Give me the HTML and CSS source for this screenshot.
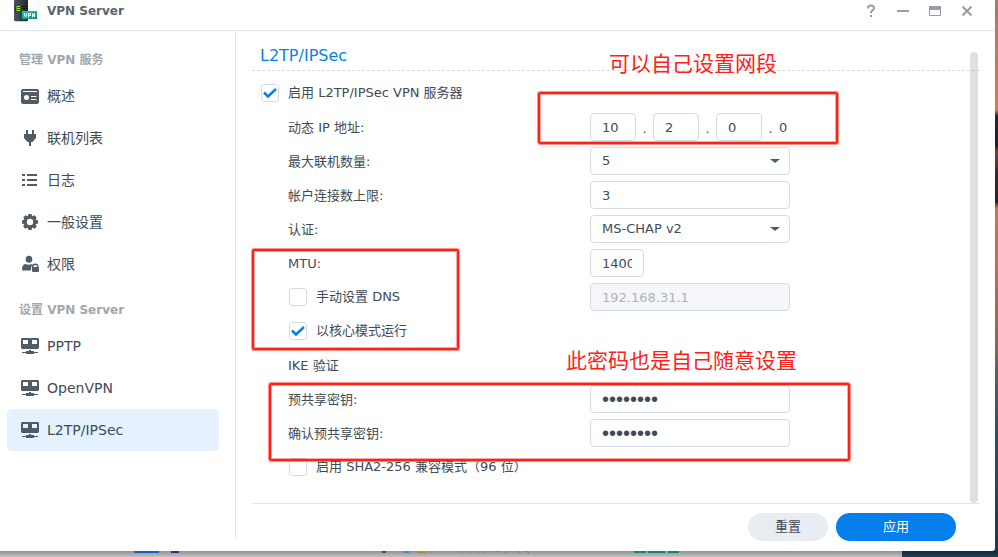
FILE: index.html
```html
<!DOCTYPE html>
<html lang="zh-CN">
<head>
<meta charset="utf-8">
<title>VPN Server</title>
<link rel="stylesheet" href="styles.css">
</head>
<body>
<svg class="defs" aria-hidden="true">
  <symbol id="net" viewBox="0 0 18 18">
    <path fill-rule="evenodd" d="M1 1h7.500l.5.5.5-.5H17l1 1v9l-1 1H1l-1-1V2zM2 3v4h5V3zM11 3v4h5V3z"/>
    <path d="M8 13h2v1h3v1h4v1h-4v1H5v-1H1v-1h4v-1h3z"/>
  </symbol>
</svg>
<div class="window">
  <header class="titlebar">
    <svg class="app-icon" width="24" height="24" viewBox="0 0 24 24" aria-hidden="true">
      <defs>
        <linearGradient id="case" x1="0" x2="1"><stop offset="0" stop-color="#4d5361"/><stop offset="1" stop-color="#23272f"/></linearGradient>
        <linearGradient id="tag" x1="0" x2="1" y1="0" y2="1"><stop offset="0" stop-color="#1fd0b0"/><stop offset="1" stop-color="#078c8c"/></linearGradient>
      </defs>
      <rect x="1" y="19" width="13" height="3" rx="1" fill="#c9ccd0"/>
      <rect x="0" y="-1" width="14" height="22" rx="1" fill="url(#case)"/>
      <path d="M1 6.500h13M1 8.500h13M1 10.500h7" stroke="#15181d"/>
      <path d="M3 6.500h3.500M3 8.500h3.500M3 10.500h3.500" stroke="#8bea1f"/>
      <path d="M2.500 6v5" stroke="#5a9c22"/>
      <rect x="8" y="11" width="15" height="8" fill="url(#tag)"/>
      <path d="M10.500 13v2l1 2 1-2v-2M14.500 17.500V13.500h2v2h-2M18.500 17.500v-4l2 3.500v-4" fill="none" stroke="#fff"/>
    </svg>
    <h1 class="app-name">VPN Server</h1>
    <div class="window-tools">
      <button type="button" aria-label="帮助"><svg viewBox="0 0 14 14"><path d="M4 4.500V4q0-2.500 3-2.500T10 4q0 1.300-1.500 2.300T7 8.500v.8M7 11v2"/></svg></button>
      <button type="button" aria-label="最小化"><svg viewBox="0 0 14 14"><path d="M1 7h12"/></svg></button>
      <button type="button" aria-label="最大化"><svg viewBox="0 0 14 14"><path d="M1 4h12" stroke-width="4"/><path d="M1.500 4v7.500h11V4" stroke-width="1"/></svg></button>
      <button type="button" aria-label="关闭"><svg viewBox="0 0 14 14"><path d="M2.500 2.500l9 9M11.500 2.500l-9 9"/></svg></button>
    </div>
  </header>
  <div class="body">
    <nav class="sidebar">
      <h2>管理 VPN 服务</h2>
      <a href="#overview"><svg viewBox="0 0 18 18"><path fill-rule="evenodd" d="M1.500 2h15L18 3.500v12L16.500 17h-15L0 15.500v-12zM2 4v1h14V4zM5.500 8a2.500 2.500 0 1 0 0 5 2.500 2.500 0 0 0 0-5M10 9v1h5.500V9zM10 12v1h5.500v-1z"/></svg>概述</a>
      <a href="#connections"><svg viewBox="0 0 18 18"><path d="M5 1h2v4h4V1h2v4h2v4l-3.500 4H10v4H8v-4H6.500L3 9V5h2z"/></svg>联机列表</a>
      <a href="#log"><svg viewBox="0 0 18 18"><path d="M1 3h3v2H1zM6 3h10v2H6zM1 8h3v2H1zM6 8h10v2H6zM1 13h3v2H1zM6 13h10v2H6z"/></svg>日志</a>
      <a href="#general"><svg viewBox="0 0 18 18"><path fill-rule="evenodd" d="M7.500 1h3l.6 2.300 2.400-1.100 2.100 2.200-1 2.100 2.400 1v3l-2.400.8 1.100 2.300-2.200 2.100-2.300-1.100-.7 2.400h-3l-.9-2.400-2.200 1.100-2.200-2.100 1.200-2.300L1 10.500v-3l2.400-1-1.100-2.200 2.200-2.100 2.200 1.100zM9 5.800a3.200 3.200 0 1 0 0 6.400 3.200 3.200 0 0 0 0-6.400"/></svg>一般设置</a>
      <a href="#privilege"><svg viewBox="0 0 18 18"><ellipse cx="8" cy="4.300" rx="3.300" ry="3.500"/><path d="M4 9q4 1.500 7 0l.5.500Q10 11 10 15.500H2q-1 0-1-1Q1 10 4 9"/><path fill-rule="evenodd" d="M11 12v-.5q0-3 3.200-3t3.200 3v.5l.6.500v4l-1 .5h-5l-1-.5v-4zM12.500 12h3.500q0-2-1.750-2T12.500 12"/></svg>权限</a>
      <h2 class="second">设置 VPN Server</h2>
      <a href="#pptp"><svg><use href="#net"/></svg>PPTP</a>
      <a href="#openvpn"><svg><use href="#net"/></svg>OpenVPN</a>
      <a href="#l2tp" class="active" aria-current="page"><svg><use href="#net"/></svg>L2TP/IPSec</a>
    </nav>
    <main>
      <form>
        <section class="settings">
          <h2>L2TP/IPSec</h2>
          <div class="row"><label class="check top"><input type="checkbox" checked>启用 L2TP/IPSec VPN 服务器</label></div>
          <div class="row"><label for="ip1">动态 IP 地址:</label>
            <div class="address"><input id="ip1" type="text" value="10"><span>.</span><input type="text" value="2" aria-label="第二段"><span>.</span><input type="text" value="0" aria-label="第三段"><span>.</span><b>0</b></div></div>
          <div class="row"><label for="max">最大联机数量:</label><div class="select"><select id="max"><option>5</option></select></div></div>
          <div class="row"><label for="limit">帐户连接数上限:</label><input id="limit" type="text" value="3"></div>
          <div class="row"><label for="auth">认证:</label><div class="select"><select id="auth"><option>MS-CHAP v2</option></select></div></div>
          <div class="row"><label for="mtu">MTU:</label><input id="mtu" class="short" type="text" value="1400"></div>
          <div class="row"><label class="check"><input type="checkbox">手动设置 DNS</label><input type="text" value="192.168.31.1" aria-label="DNS" disabled></div>
          <div class="row"><label class="check"><input type="checkbox" checked>以核心模式运行</label></div>
          <div class="row"><span>IKE 验证</span></div>
          <div class="row"><label for="key">预共享密钥:</label><input id="key" type="password" value="abcdefgh"></div>
          <div class="row"><label for="key2">确认预共享密钥:</label><input id="key2" type="password" value="abcdefgh"></div>
          <div class="row"><label class="check"><input type="checkbox">启用 SHA2-256 兼容模式（96 位）</label></div>
        </section>
        <footer><button type="reset">重置</button><button type="submit" class="primary">应用</button></footer>
      </form>
      <div class="scrollbar"></div>
    </main>
  </div>
</div>
<div class="mark mark-address"></div>
<div class="mark mark-mtu"></div>
<div class="mark mark-key"></div>
<p class="note note-address">可以自己设置网段</p>
<p class="note note-key">此密码也是自己随意设置</p>
<svg class="behind" width="700" height="5" aria-hidden="true">
  <path d="M134 0h25v2h-25z" fill="#1463c4"/><path d="M171 0h8v2h-8z" fill="#173c94"/>
  <path d="M382 0h4v2h-4z" fill="#15569f"/><path d="M404 0h5v2h-5z" fill="#3d86c8"/><path d="M417 0h9v2h-9z" fill="#b38b36"/>
  <path d="M463 0l-1 2M469 0v2M477 0v2M484 0l2 2M495 0h6M505 0v2M520 0l-2 2M526 0l3 2" stroke="#777"/>
  <path d="M634 0h12v2h-12zM648 0h17v2h-17zM668 0h11v2h-11z" fill="#168078"/>
</svg>
</body>
</html>
```

FILE: styles.css
```css
* {
  box-sizing: border-box;
}

body {
  margin: 0;
  height: 100vh;
  padding: 0 3px 6px 0;
  overflow: hidden;
  position: relative;
  color: #414b55;
  font: 13px/20px "DejaVu Sans", "Noto Sans CJK SC", sans-serif;
  background:
    linear-gradient(#182a38, #1f4256) right bottom / 96px 6px no-repeat,
    linear-gradient(#8f8f8f, #c2c2c2) left bottom / 100% 6px no-repeat,
    linear-gradient(#a87868 0, #c07a50 60px, #c8814e 110px, #2a2430 116px, #1d1d2c 145px, #7a3f38 152px, #3a2430 175px, #2a2028 202px, #c07848 208px, #b87450 260px, #8a6458 350px, #5a6068 370px, #2c5068 430px, #1a3a50 557px);
}

h1, h2, p {
  margin: 0;
}

button, input, select {
  font: inherit;
  color: inherit;
}

.defs {
  position: absolute;
  width: 0;
  height: 0;
}

.window {
  height: 100%;
  display: flex;
  flex-direction: column;
  background: #fff;
  border-radius: 0 0 3px 0;
}

.titlebar {
  height: 31px;
  flex: none;
  display: flex;
  align-items: flex-start;
  padding: 0 20px 0 14px;
  border-bottom: 1px solid #dfe7ee;
}

.app-icon {
  margin-right: 9px;
}

.app-name {
  font-size: 12px;
  line-height: 22px;
  color: #59636d;
}

.window-tools {
  margin-left: auto;
  display: flex;
  gap: 16px;
  padding-top: 3px;
}

.window-tools button {
  width: 16px;
  height: 16px;
  padding: 1px;
  border: 0;
  background: none;
}

.window-tools svg {
  display: block;
  fill: none;
  stroke: #969da6;
  stroke-width: 2;
}

.body {
  flex: 1;
  min-height: 0;
  display: flex;
}

.sidebar {
  width: 236px;
  flex: none;
  margin-bottom: 12px;
  padding: 12px 16px 0 7px;
  border-right: 1px solid #e1e6ec;
}

.sidebar h2 {
  padding: 7px 12px 5px;
  font-size: 12px;
  color: #a1a6ab;
}

.sidebar .second {
  margin-top: 8px;
}

.sidebar a {
  height: 42px;
  display: flex;
  align-items: center;
  gap: 8px;
  padding-left: 14px;
  border-radius: 5px;
  font-size: 14px;
  color: inherit;
  text-decoration: none;
}

.sidebar a.active {
  background: #e5f1fe;
}

.sidebar svg {
  width: 18px;
  height: 18px;
  fill: #505b66;
}

main {
  flex: 1;
  position: relative;
  padding: 12px 15px 10px 16px;
}

form {
  height: 100%;
  display: flex;
  flex-direction: column;
}

.settings {
  flex: 1;
  border-bottom: 1px solid #e1e6ec;
}

.settings h2 {
  height: 28px;
  padding: 3px 8px;
  margin-bottom: 5px;
  font-size: 16px;
  font-weight: 400;
  color: #0a80eb;
  border-bottom: 1px dashed #d2dfe8;
}

.row {
  height: 34px;
  display: grid;
  grid-template-columns: 302px 1fr;
  align-items: center;
  padding-left: 36px;
}

.row > label, .row > span {
  line-height: 22px;
}

.row > label:not(.check), .row > span {
  padding-top: 2px;
}

.check {
  display: flex;
  align-items: center;
  gap: 9px;
}

.check.top {
  margin-left: -28px;
}

input[type="checkbox"] {
  appearance: none;
  width: 18px;
  height: 18px;
  margin: 0 0 0 1px;
  border: 1px solid #d2dde6;
  border-radius: 3px;
  background: #fff;
}

input[type="checkbox"]:checked {
  background: #fff url("data:image/svg+xml,%3Csvg xmlns='http://www.w3.org/2000/svg' viewBox='0 0 16 16'%3E%3Cpath d='M2 7.500L6 11.500L14 4' fill='none' stroke='%23087fec' stroke-width='2.500'/%3E%3C/svg%3E");
}

input[type="text"], input[type="password"], select {
  width: 200px;
  height: 28px;
  padding: 0 11px;
  border: 1px solid #d2dde6;
  border-radius: 4px;
  background: #fff;
}

input[type="password"] {
  font: 20px/26px "Liberation Sans", sans-serif;
}

input[type="text"]:disabled {
  color: #aeb3ba;
  background: #f4f6fa;
}

input.short[type="text"] {
  width: 54px;
}

.select {
  width: 200px;
  position: relative;
}

select {
  display: block;
  appearance: none;
}

.select::after {
  content: "";
  position: absolute;
  top: 12px;
  right: 10px;
  border: 5px solid transparent;
  border-top: 4px solid #505b66;
  border-bottom: 0;
}

.address {
  display: flex;
  align-items: center;
}

.address input[type="text"] {
  width: 46px;
}

.address span {
  width: 17px;
  padding-top: 4px;
  text-align: center;
}

.address b {
  padding-top: 2px;
  font-weight: 400;
}

footer {
  display: flex;
  justify-content: flex-end;
  gap: 8px;
  padding: 9px 24px 0 0;
}

footer button {
  width: 80px;
  height: 28px;
  padding: 0;
  border: 0;
  border-radius: 14px;
  background: #e8edf4;
}

footer .primary {
  width: 120px;
  color: #fff;
  background: #057feb;
}

.scrollbar {
  position: absolute;
  top: 21px;
  right: 17px;
  bottom: 48px;
  width: 8px;
  border-radius: 4px;
  background: rgba(0, 0, 0, 0.12);
}

.mark {
  position: absolute;
  border: 2px solid #ff2116;
  border-radius: 2px;
  box-shadow: 0 0 0 1px rgba(255, 33, 22, 0.5), inset 0 0 0 1px rgba(255, 33, 22, 0.4);
}

.mark-address {
  left: 538px;
  top: 92px;
  width: 300px;
  height: 52px;
}

.mark-mtu {
  left: 252px;
  top: 249px;
  width: 207px;
  height: 101px;
}

.mark-key {
  left: 269px;
  top: 383px;
  width: 581px;
  height: 78px;
}

.note {
  position: absolute;
  font: 21px/28px "Noto Sans CJK SC", sans-serif;
  color: #ff2116;
}

.note-address {
  left: 609px;
  top: 48px;
}

.note-key {
  left: 566px;
  top: 345px;
}

.behind {
  position: absolute;
  left: 0;
  bottom: 1px;
}
```
